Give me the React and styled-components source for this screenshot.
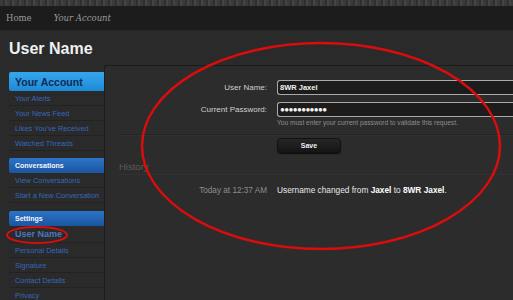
import React from 'react'
import styled, { createGlobalStyle } from 'styled-components'

const GlobalStyle = createGlobalStyle`
    html, body {
        margin: 0;
        padding: 0;
        background: #2a2a2a;
        font-family: "Liberation Sans", Arial, sans-serif;
    }
`

const Page = styled.div`
    position: relative;
    width: 513px;
    height: 300px;
    overflow: hidden;
    background: #2a2a2a;
`

const TopStrip = styled.div`
    height: 6px;
    background: repeating-linear-gradient(90deg, #3a3a3a 0 3px, #303030 3px 5px, #444 5px 7px);
`

const NavBar = styled.div`
    height: 24px;
    display: flex;
    align-items: center;
    gap: 22px;
    padding-left: 6px;
    background: #1c1c1c;
    border-bottom: 1px solid #262626;
`

const NavLink = styled.span`
    font-family: "DejaVu Serif", "Liberation Serif", serif;
    font-size: 8.5px;
    color: #9a9a9a;
    font-style: ${p => (p.$italic ? 'italic' : 'normal')};
`

const Title = styled.h1`
    margin: 0;
    padding: 9px 0 0 9px;
    height: 25px;
    font-size: 16px;
    font-weight: bold;
    color: #eef0f2;
`

const Body = styled.div`
    display: flex;
`

const Sidebar = styled.div`
    width: 95px;
    margin-left: 9px;
    padding-top: 7px;
    flex-shrink: 0;
`

const SectionHead = styled.div`
    height: ${p => (p.$big ? 19 : 15)}px;
    margin-top: ${p => p.$gap || 0}px;
    padding-left: 6px;
    display: flex;
    align-items: center;
    font-weight: bold;
    font-size: ${p => (p.$big ? 10.5 : 7)}px;
    color: ${p => (p.$big ? '#0d2b55' : '#f4f6fa')};
    background: ${p => (p.$big
        ? 'linear-gradient(#35a6ee, #1f8ad6)'
        : 'linear-gradient(#2c74c8, #1b55a0)')};
    border-radius: 2px 0 0 2px;
`

const NavItem = styled.div`
    height: ${p => (p.$current ? 16 : 14)}px;
    padding-left: 6px;
    display: flex;
    align-items: center;
    font-size: ${p => (p.$current ? 9 : 7.4)}px;
    font-weight: ${p => (p.$current ? 'bold' : 'normal')};
    color: ${p => (p.$current ? '#4a78c0' : '#3568bb')};
    border-bottom: 1px solid #222;
    white-space: nowrap;
`

const Panel = styled.div`
    flex: 1;
    height: 240px;
    background: #2c2c2c;
    border-left: 1px solid #1b1b1b;
    border-top: 1px solid #1b1b1b;
    border-radius: 3px 0 0 0;
    padding-top: 14px;
`

const FormRow = styled.div`
    display: grid;
    grid-template-columns: 162px 1fr;
    column-gap: 10px;
    align-items: center;
    margin-bottom: ${p => p.$mb || 0}px;
`

const Label = styled.div`
    text-align: right;
    font-size: 8px;
    color: #d0d0d0;
`

const Input = styled.div`
    height: 13px;
    border: 1px solid #a9a9a9;
    border-right: none;
    border-radius: 3px 0 0 3px;
    background: #1c1c1c;
    color: #f2f2f2;
    font-size: ${p => (p.$dots ? 8 : 7.5)}px;
    font-weight: bold;
    letter-spacing: ${p => (p.$dots ? '-0.6px' : '0')};
    display: flex;
    align-items: center;
    padding-left: 2px;
`

const Hint = styled.div`
    grid-column: 2;
    font-size: 6.6px;
    color: #8c8c8c;
    margin-top: 2px;
`

const Divider = styled.div`
    margin: 8px 0 0 14px;
    border-top: 1px solid #242424;
    border-bottom: 1px solid #323232;
`

const SaveButton = styled.div`
    grid-column: 2;
    width: 64px;
    height: 15px;
    margin-top: 2px;
    border-radius: 4px;
    background: linear-gradient(#262626, #151515);
    border: 1px solid #111;
    box-shadow: 0 1px 1px #0c0c0c;
    color: #f0f0f0;
    font-size: 7px;
    font-weight: bold;
    display: flex;
    align-items: center;
    justify-content: center;
    box-sizing: border-box;
`

const SectionTitle = styled.div`
    margin: 8px 0 0 14px;
    padding-bottom: 2px;
    font-size: 9.5px;
    color: #5c5c5c;
    border-bottom: 1px solid #323232;
`

const Time = styled.div`
    text-align: right;
    font-size: 8.2px;
    color: #8e8e8e;
`

const Message = styled.div`
    font-size: 8.3px;
    color: #e8e8e8;
    b { color: #fff; }
`

const HistoryRow = styled(FormRow)`
    margin-top: 10px;
`

const Marker = styled.svg`
    position: absolute;
    left: 0;
    top: 0;
    pointer-events: none;
`

export default function App() {
    return (
        <Page>
            <GlobalStyle />
            <TopStrip />
            <NavBar>
                <NavLink>Home</NavLink>
                <NavLink $italic>Your Account</NavLink>
            </NavBar>
            <Title>User Name</Title>
            <Body>
                <Sidebar>
                    <SectionHead $big>Your Account</SectionHead>
                    <NavItem>Your Alerts</NavItem>
                    <NavItem>Your News Feed</NavItem>
                    <NavItem>Likes You've Received</NavItem>
                    <NavItem>Watched Threads</NavItem>
                    <SectionHead $gap={7}>Conversations</SectionHead>
                    <NavItem>View Conversations</NavItem>
                    <NavItem>Start a New Conversation</NavItem>
                    <SectionHead $gap={8}>Settings</SectionHead>
                    <NavItem $current>User Name</NavItem>
                    <NavItem>Personal Details</NavItem>
                    <NavItem>Signature</NavItem>
                    <NavItem>Contact Details</NavItem>
                    <NavItem>Privacy</NavItem>
                </Sidebar>
                <Panel>
                    <FormRow $mb={7}>
                        <Label>User Name:</Label>
                        <Input>8WR Jaxel</Input>
                    </FormRow>
                    <FormRow>
                        <Label>Current Password:</Label>
                        <Input $dots>●●●●●●●●●●●</Input>
                        <Hint>You must enter your current password to validate this request.</Hint>
                    </FormRow>
                    <Divider />
                    <FormRow>
                        <span />
                        <SaveButton>Save</SaveButton>
                    </FormRow>
                    <SectionTitle>History</SectionTitle>
                    <HistoryRow>
                        <Time>Today at 12:37 AM</Time>
                        <Message>Username changed from <b>Jaxel</b> to <b>8WR Jaxel</b>.</Message>
                    </HistoryRow>
                </Panel>
            </Body>
            <Marker width="513" height="300" viewBox="0 0 513 300">
                <ellipse cx="321" cy="146" rx="179" ry="103" fill="none" stroke="#d90d0d" strokeWidth="2.5" />
                <ellipse cx="37" cy="235" rx="30" ry="8" fill="none" stroke="#d90d0d" strokeWidth="2" />
            </Marker>
        </Page>
    )
}
